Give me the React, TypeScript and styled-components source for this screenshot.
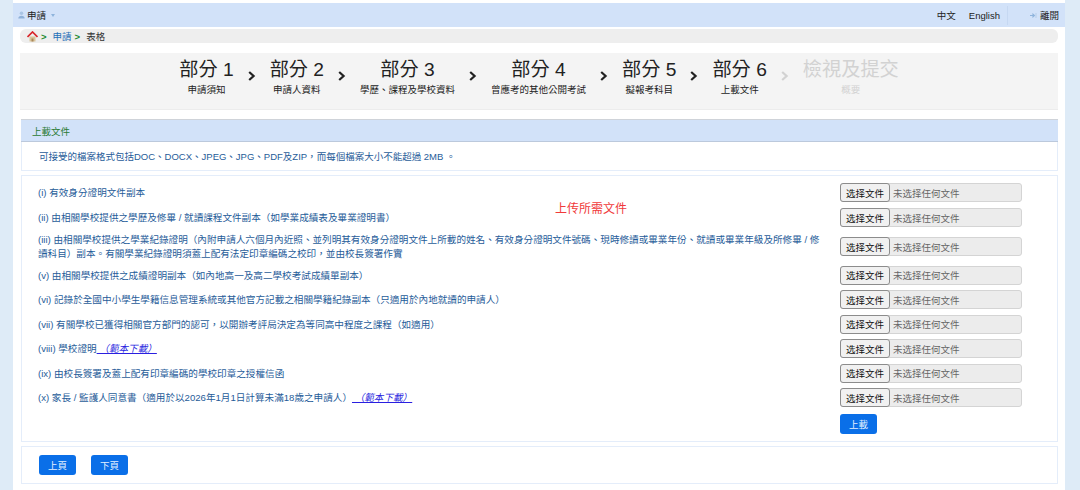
import { Fragment } from 'react';
import styled, { createGlobalStyle } from 'styled-components';

const FONT = '"Liberation Sans", "Noto Sans CJK TC", sans-serif';

const GlobalStyle = createGlobalStyle`
    html, body {
        margin: 0;
        padding: 0;
        height: 490px;
        overflow: hidden;
        background: #deebf7;
        font-family: ${FONT};
    }
`;

const Shell = styled.div`
    margin: 0 15px 0 13px;
    height: 490px;
    padding-top: 3px;
    box-sizing: border-box;
    background: #fff;
    display: flex;
    flex-direction: column;
    overflow: hidden;
`;

const TopBar = styled.header`
    height: 24px;
    flex: none;
    background: #d2e2f9;
    display: flex;
    align-items: center;
    padding: 0 6px 0 5px;
    font-size: 9.5px;
    color: #222;
`;

const UserMenu = styled.div`
    display: flex;
    align-items: center;
    gap: 2px;
    flex: 1;
`;

const Caret = styled.span`
    width: 0;
    height: 0;
    margin-left: 3px;
    border-left: 2.5px solid transparent;
    border-right: 2.5px solid transparent;
    border-top: 3px solid #8fb4dc;
`;

const LangLink = styled.a<{ $gap?: number }>`
    margin-right: ${(p) => p.$gap ?? 0}px;
    color: #222;
`;

const Divider = styled.span`
    width: 1px;
    height: 19px;
    margin: 0 22px 0 7px;
    background: #c6d8f2;
`;

const LeaveLink = styled.a`
    display: flex;
    align-items: center;
    gap: 3px;
    color: #222;
`;

const Content = styled.main`
    display: flex;
    flex-direction: column;
    padding: 2px 7px 0;
`;

const Breadcrumb = styled.nav`
    height: 14px;
    border-radius: 6px;
    background: #eeeeee;
    display: flex;
    align-items: center;
    gap: 3px;
    padding-left: 7px;
    font-size: 9.5px;
    color: #333;
`;

const CrumbSep = styled.span`
    color: #1c8a2e;
    font-weight: bold;
    margin-right: 3px;
`;

const CrumbLink = styled.a`
    color: #1f6fb8;
`;

const Stepper = styled.section`
    height: 57px;
    margin-top: 10px;
    background: #f4f4f4;
    border-bottom: 1px solid #ececec;
    box-sizing: border-box;
    display: flex;
    justify-content: center;
    padding-top: 5px;
`;

const Step = styled.div<{ $off?: boolean }>`
    display: flex;
    flex-direction: column;
    align-items: center;
    color: ${(p) => (p.$off ? '#d2d2d2' : '#222')};
`;

const StepTitle = styled.div`
    font-size: 19.2px;
    line-height: 23px;
    white-space: nowrap;
`;

const StepSub = styled.div`
    font-size: 9.5px;
    line-height: 14px;
    margin-top: 2px;
    white-space: nowrap;
`;

const StepArrow = styled.div<{ $off?: boolean }>`
    width: 36px;
    height: 30px;
    flex: none;
    display: flex;
    align-items: center;
    justify-content: center;
    padding-top: 5px;
    box-sizing: border-box;
    color: ${(p) => (p.$off ? '#d2d2d2' : '#222')};
`;

const PanelTitle = styled.div`
    height: 23px;
    margin: 9px 0 0 1px;
    box-sizing: border-box;
    background: #d2e2f9;
    border-top: 1px solid #cfd3d9;
    border-bottom: 1px solid #bcc9dc;
    display: flex;
    align-items: center;
    padding-left: 11px;
    font-size: 9.5px;
    color: #2a7a33;
`;

const Notice = styled.div`
    height: 29px;
    margin-left: 1px;
    box-sizing: border-box;
    border: 1px solid #e4edfa;
    border-top: none;
    display: flex;
    align-items: center;
    padding-left: 17px;
    font-size: 9.5px;
    color: #1f5c99;
`;

const FilePanel = styled.section`
    position: relative;
    height: 267px;
    margin: 4px 0 0 1px;
    box-sizing: border-box;
    border: 1px solid #e4edfa;
    padding: 4px 0 0 16px;
    display: flex;
    flex-direction: column;
`;

const Overlay = styled.div`
    position: absolute;
    left: 533px;
    top: 23px;
    font-size: 12px;
    color: #f03a3a;
`;

const Row = styled.div<{ $height: number }>`
    height: ${(p) => p.$height}px;
    flex: none;
    display: flex;
    align-items: center;
    justify-content: space-between;
`;

const RowText = styled.div<{ $wrapped: boolean }>`
    width: 785px;
    padding-top: ${(p) => (p.$wrapped ? 0 : 1)}px;
    font-size: 9.6px;
    line-height: 14px;
    color: #1f5c99;
`;

const SampleLink = styled.a`
    color: #2a1fe0;
    font-style: italic;
    text-decoration: underline;
    white-space: pre;
`;

const FileField = styled.div`
    width: 182px;
    height: 19px;
    flex: none;
    margin-right: 35px;
    box-sizing: border-box;
    border: 1px solid #d4d4d4;
    border-radius: 3px;
    background: #ececec;
    display: flex;
    align-items: center;
    font-size: 9.5px;
    color: #666;
`;

const FileButton = styled.button`
    width: 50px;
    height: 19px;
    margin: 0 3px 0 -1px;
    padding: 0;
    flex: none;
    box-sizing: border-box;
    border: 1px solid #8c8c8c;
    border-radius: 3px;
    background: #f1f1f1;
    font-family: ${FONT};
    font-size: 9.5px;
    color: #111;
`;

const PrimaryButton = styled.button`
    width: 37px;
    height: 20px;
    padding: 0;
    border: none;
    border-radius: 3px;
    background: #0a6fe8;
    font-family: ${FONT};
    font-size: 9.5px;
    color: #e4f0ff;
`;

const UploadRow = styled.div`
    display: flex;
    justify-content: flex-end;
    margin: 4px 180px 0 0;
`;

const Footer = styled.footer`
    height: 38px;
    margin: 4px 0 0 1px;
    box-sizing: border-box;
    border: 1px solid #e4edfa;
    display: flex;
    align-items: center;
    gap: 15px;
    padding-left: 17px;
`;

const UserIcon = () => (
    <svg width="7" height="8" viewBox="0 0 7 8">
        <circle cx="3.5" cy="2.3" r="1.8" fill="#a9c4e4" />
        <path d="M0.3 7.6c0-2 1.4-2.8 3.2-2.8s3.2.8 3.2 2.8z" fill="#8fb1d8" />
    </svg>
);

const LeaveIcon = () => (
    <svg width="7" height="7" viewBox="0 0 7 7">
        <path d="M0 3.5h4M2.4 1.6l2 1.9-2 1.9" fill="none" stroke="#8fb4dc" strokeWidth="1.2" />
        <path d="M6 1v5" stroke="#b5cde8" strokeWidth="1" />
    </svg>
);

const HomeIcon = () => (
    <svg width="11" height="11" viewBox="0 0 11 11">
        <path d="M2.5 5.5h6V10.5h-6z" fill="#d9c49a" />
        <path d="M4.5 7.5h2v3h-2z" fill="#a8875a" />
        <path d="M0.5 6L5.5 1l5 5" fill="none" stroke="#d8262c" strokeWidth="1.7" />
    </svg>
);

const ChevronIcon = () => (
    <svg width="8" height="10" viewBox="0 0 8 10">
        <path d="M1.2 1l4.4 4-4.4 4" fill="none" stroke="currentColor" strokeWidth="2.2" />
    </svg>
);

const steps = [
    { title: '部分 1', sub: '申請須知' },
    { title: '部分 2', sub: '申請人資料' },
    { title: '部分 3', sub: '學歷、課程及學校資料' },
    { title: '部分 4', sub: '曾應考的其他公開考試' },
    { title: '部分 5', sub: '擬報考科目' },
    { title: '部分 6', sub: '上載文件' },
    { title: '檢視及提交', sub: '概要', off: true },
];

const rows = [
    { text: '(i) 有效身分證明文件副本', height: 25 },
    { text: '(ii) 由相關學校提供之學歷及修畢 / 就讀課程文件副本（如學業成績表及畢業證明書）', height: 25 },
    {
        text: '(iii) 由相關學校提供之學業紀錄證明（內附申請人六個月內近照、並列明其有效身分證明文件上所載的姓名、有效身分證明文件號碼、現時修讀或畢業年份、就讀或畢業年級及所修畢 / 修讀科目）副本。有關學業紀錄證明須蓋上配有法定印章編碼之校印，並由校長簽署作實',
        height: 33,
        wrapped: true,
    },
    { text: '(v) 由相關學校提供之成績證明副本（如內地高一及高二學校考試成績單副本）', height: 24 },
    { text: '(vi) 記錄於全國中小學生學籍信息管理系統或其他官方記載之相關學籍紀錄副本（只適用於內地就讀的申請人）', height: 25 },
    { text: '(vii) 有關學校已獲得相關官方部門的認可，以開辦考評局決定為等同高中程度之課程（如適用）', height: 24 },
    { text: '(viii) 學校證明', sample: ' （範本下載）', height: 25 },
    { text: '(ix) 由校長簽署及蓋上配有印章編碼的學校印章之授權信函', height: 24 },
    { text: '(x) 家長 / 監護人同意書（適用於以2026年1月1日計算未滿18歲之申請人）', sample: ' （範本下載）', height: 25 },
];

export default function App() {
    return (
        <>
            <GlobalStyle />
            <Shell>
                <TopBar>
                    <UserMenu>
                        <UserIcon />
                        <span>申請</span>
                        <Caret />
                    </UserMenu>
                    <LangLink $gap={13}>中文</LangLink>
                    <LangLink>English</LangLink>
                    <Divider />
                    <LeaveLink>
                        <LeaveIcon />
                        離開
                    </LeaveLink>
                </TopBar>
                <Content>
                    <Breadcrumb>
                        <HomeIcon />
                        <CrumbSep>&gt;</CrumbSep>
                        <CrumbLink>申請</CrumbLink>
                        <CrumbSep>&gt;</CrumbSep>
                        <span>表格</span>
                    </Breadcrumb>
                    <Stepper>
                        {steps.map((step, i) => (
                            <Fragment key={step.title}>
                                {i > 0 && (
                                    <StepArrow $off={step.off}>
                                        <ChevronIcon />
                                    </StepArrow>
                                )}
                                <Step $off={step.off}>
                                    <StepTitle>{step.title}</StepTitle>
                                    <StepSub>{step.sub}</StepSub>
                                </Step>
                            </Fragment>
                        ))}
                    </Stepper>
                    <PanelTitle>上載文件</PanelTitle>
                    <Notice>可接受的檔案格式包括DOC、DOCX、JPEG、JPG、PDF及ZIP，而每個檔案大小不能超過 2MB 。</Notice>
                    <FilePanel>
                        <Overlay>上传所需文件</Overlay>
                        {rows.map((row) => (
                            <Row key={row.text} $height={row.height}>
                                <RowText $wrapped={!!row.wrapped}>
                                    {row.text}
                                    {row.sample && <SampleLink>{row.sample}</SampleLink>}
                                </RowText>
                                <FileField>
                                    <FileButton>选择文件</FileButton>
                                    未选择任何文件
                                </FileField>
                            </Row>
                        ))}
                        <UploadRow>
                            <PrimaryButton>上載</PrimaryButton>
                        </UploadRow>
                    </FilePanel>
                    <Footer>
                        <PrimaryButton>上頁</PrimaryButton>
                        <PrimaryButton>下頁</PrimaryButton>
                    </Footer>
                </Content>
            </Shell>
        </>
    );
}
